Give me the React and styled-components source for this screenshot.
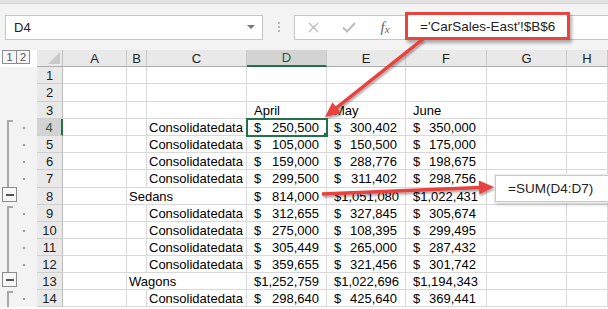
import React from "react";
import styled, { createGlobalStyle } from "styled-components";

const GlobalStyle = createGlobalStyle`
  html, body { margin: 0; padding: 0; background: #fff; }
  body { font-family: "Liberation Sans", Arial, sans-serif; overflow: hidden; }
`;

const GREEN = "#217346";
const RED = "#e8433f";

const Page = styled.div`
  position: relative;
  width: 608px;
  height: 309px;
  overflow: hidden;
  background: #f3f3f3;
`;

const Ribbon = styled.div`
  height: 4px;
  background: #e2e2e2;
  border-bottom: 1px solid #d4d4d4;
  box-sizing: border-box;
`;

const FormulaBar = styled.div`
  display: flex;
  align-items: center;
  height: 46px;
  padding-left: 5px;
  box-sizing: border-box;
`;

const NameBox = styled.div`
  width: 258px;
  height: 25px;
  box-sizing: border-box;
  border: 1px solid #c6c6c6;
  background: #fff;
  display: flex;
  align-items: center;
  justify-content: space-between;
  padding: 0 7px 0 8px;
  font-size: 13px;
  color: #222;
`;

const Caret = styled.span`
  width: 0;
  height: 0;
  border-left: 4px solid transparent;
  border-right: 4px solid transparent;
  border-top: 4px solid #777;
`;

const Grip = styled.div`
  width: 31px;
  display: flex;
  flex-direction: column;
  align-items: center;
  gap: 2px;
`;

const GripDot = styled.span`
  width: 2px;
  height: 2px;
  background: #b8b8b8;
`;

const FxBox = styled.div`
  flex: 1;
  height: 25px;
  box-sizing: border-box;
  border: 1px solid #c6c6c6;
  border-right: none;
  background: #fff;
  display: flex;
  align-items: center;
`;

const IconSlot = styled.span`
  width: ${p => p.$w}px;
  display: flex;
  justify-content: center;
  align-items: center;
`;

const Fx = styled.span`
  font-family: "Liberation Serif", "Times New Roman", serif;
  font-style: italic;
  font-size: 15px;
  color: #666;
  small {
    font-size: 11px;
    position: relative;
    top: 1px;
  }
`;

const Sheet = styled.div`
  display: grid;
  grid-template-columns: 37px 26px 64px 20px 100px 80px 79px 81px 80px 1fr;
  background: #fff;
`;

const Gutter = styled.div`
  background: #f3f3f3;
  display: flex;
  align-items: stretch;
  padding-left: ${p => (p.$minus ? 2 : 7)}px;
`;

const LevelButtons = styled.div`
  display: flex;
  align-items: flex-start;
  padding-left: 2px;
`;

const LevelButton = styled.span`
  width: ${p => p.$w}px;
  height: 14px;
  box-sizing: border-box;
  border: 1px solid #8e8e8e;
  margin-left: ${p => (p.$first ? 0 : -1)}px;
  display: flex;
  align-items: center;
  justify-content: center;
  font-size: 11px;
  color: #555;
  background: #f6f6f6;
`;

const Rail = styled.span`
  width: 6px;
  box-sizing: border-box;
  border-left: 2px solid #a8a8a8;
  border-top: ${p => (p.$top ? "2px solid #a8a8a8" : "none")};
  margin-top: ${p => (p.$top ? 1 : 0)}px;
`;

const OutlineDot = styled.span`
  align-self: center;
  width: 2px;
  height: 2px;
  margin-left: 10px;
  background: #9c9c9c;
`;

const MinusBox = styled.span`
  align-self: flex-start;
  margin-top: -1px;
  width: 15px;
  height: 15px;
  box-sizing: border-box;
  border: 1px solid #8a8a8a;
  background: #f7f7f7;
  display: flex;
  align-items: center;
  justify-content: center;
  &::before {
    content: "";
    width: 8px;
    height: 2px;
    background: #555;
  }
`;

const Corner = styled.div`
  background: #e9e9e9;
  border-right: 1px solid #bdbdbd;
  border-bottom: 1px solid #ababab;
  display: flex;
  align-items: flex-end;
  justify-content: flex-end;
  padding: 0 2px 2px 0;
`;

const CornerTriangle = styled.span`
  width: 0;
  height: 0;
  border-left: 12px solid transparent;
  border-bottom: 12px solid #c9c9c9;
`;

const ColHeader = styled.div`
  background: ${p => (p.$active ? "#d3d3d3" : "#e9e9e9")};
  border-right: 1px solid #c8c8c8;
  border-bottom: ${p => (p.$active ? `2px solid ${GREEN}` : "1px solid #ababab")};
  display: flex;
  align-items: center;
  justify-content: center;
  font-size: 13px;
  color: ${p => (p.$active ? "#1e5c39" : "#222")};
  overflow: hidden;
`;

const RowHeader = styled.div`
  background: ${p => (p.$active ? "#d3d3d3" : "#e9e9e9")};
  border-right: ${p => (p.$active ? `2px solid ${GREEN}` : "1px solid #bdbdbd")};
  border-bottom: 1px solid #cfcfcf;
  display: flex;
  align-items: center;
  justify-content: center;
  font-size: 13px;
  color: ${p => (p.$active ? "#2c5a3e" : "#222")};
`;

const Cell = styled.div`
  position: relative;
  z-index: ${p => (p.$selected ? 2 : p.$spill ? 1 : 0)};
  box-sizing: border-box;
  border-right: 1px solid ${p => (p.$spill ? "transparent" : "#d9d9d9")};
  border-bottom: 1px solid #d9d9d9;
  display: flex;
  align-items: center;
  justify-content: ${p =>
    p.$money ? "space-between" : p.$right ? "flex-end" : "flex-start"};
  padding: 0 ${p => p.$pr ?? 2}px 0 ${p => p.$pl ?? 2}px;
  font-size: 13px;
  color: #000;
  white-space: nowrap;
  overflow: ${p => (p.$spill ? "visible" : "hidden")};
  outline: ${p => (p.$selected ? `2px solid ${GREEN}` : "none")};
  outline-offset: -1px;
  ${p =>
    p.$selected &&
    `
    &::after {
      content: "";
      position: absolute;
      right: -4px;
      bottom: -4px;
      width: 5px;
      height: 5px;
      background: ${GREEN};
      border: 1px solid #fff;
    }
  `}
`;

const FormulaCallout = styled.div`
  position: absolute;
  left: 405px;
  top: 12px;
  width: 165px;
  height: 28px;
  box-sizing: border-box;
  border: 3px solid ${RED};
  background: #fff;
  box-shadow: 2px 3px 3px rgba(0, 0, 0, 0.3);
  display: flex;
  align-items: center;
  padding-left: 12px;
  font-size: 13.5px;
  color: #222;
`;

const SumCallout = styled.div`
  position: absolute;
  left: 495px;
  top: 175px;
  width: 140px;
  height: 27px;
  box-sizing: border-box;
  border: 1px solid #c9c9c9;
  background: #fff;
  box-shadow: 0 0 0 1px #ececec, 1px 2px 4px rgba(0, 0, 0, 0.25);
  display: flex;
  align-items: center;
  padding-left: 12px;
  font-size: 13.5px;
  color: #222;
`;

const Overlay = styled.svg`
  position: absolute;
  left: 0;
  top: 0;
  width: 608px;
  height: 309px;
  pointer-events: none;
`;

const cols = ["A", "B", "C", "D", "E", "F", "G", "H"];
const heights = [17, 18, 17, 17, 17, 17, 18, 17, 17, 17, 17, 17, 17, 17];
const padRight = [7, 8, 10];

const rows = [
  { n: 1 },
  { n: 2 },
  { n: 3, heads: ["April", "May", "June"] },
  { n: 4, mark: "dot", rail: "top", c: "Consolidatedata", vals: ["250,500", "300,402", "350,000"] },
  { n: 5, mark: "dot", rail: "mid", c: "Consolidatedata", vals: ["105,000", "150,500", "175,000"] },
  { n: 6, mark: "dot", rail: "mid", c: "Consolidatedata", vals: ["159,000", "288,776", "198,675"] },
  { n: 7, mark: "dot", rail: "mid", c: "Consolidatedata", vals: ["299,500", "311,402", "298,756"] },
  { n: 8, mark: "minus", b: "Sedans", vals: ["814,000", "1,051,080", "1,022,431"] },
  { n: 9, mark: "dot", rail: "top", c: "Consolidatedata", vals: ["312,655", "327,845", "305,674"] },
  { n: 10, mark: "dot", rail: "mid", c: "Consolidatedata", vals: ["275,000", "108,395", "299,495"] },
  { n: 11, mark: "dot", rail: "mid", c: "Consolidatedata", vals: ["305,449", "265,000", "287,432"] },
  { n: 12, mark: "dot", rail: "mid", c: "Consolidatedata", vals: ["359,655", "321,456", "301,742"] },
  { n: 13, mark: "minus", b: "Wagons", vals: ["1,252,759", "1,022,696", "1,194,343"] },
  { n: 14, mark: "dot", rail: "top", c: "Consolidatedata", vals: ["298,640", "425,640", "369,441"] },
];

function Arrow({ x1, y1, x2, y2 }) {
  const dx = x2 - x1;
  const dy = y2 - y1;
  const len = Math.hypot(dx, dy);
  const ux = dx / len;
  const uy = dy / len;
  const head = 15;
  const half = 7;
  const bx = x2 - ux * head;
  const by = y2 - uy * head;
  const pts = [
    [x2, y2],
    [bx - uy * half, by + ux * half],
    [bx + uy * half, by - ux * half],
  ]
    .map(p => p.join(","))
    .join(" ");
  return (
    <g filter="url(#shade)">
      <line x1={x1} y1={y1} x2={bx + ux * 2} y2={by + uy * 2} stroke={RED} strokeWidth="3.5" />
      <polygon points={pts} fill={RED} />
    </g>
  );
}

function OutlineCell({ row }) {
  if (row.mark === "minus") {
    return (
      <Gutter $minus>
        <MinusBox />
      </Gutter>
    );
  }
  if (!row.rail) return <Gutter />;
  return (
    <Gutter>
      <Rail $top={row.rail === "top"} />
      {row.mark === "dot" && <OutlineDot />}
    </Gutter>
  );
}

function SheetRow({ row }) {
  const cells = [];
  cells.push(<OutlineCell key="g" row={row} />);
  cells.push(
    <RowHeader key="h" $active={row.n === 4}>
      {row.n}
    </RowHeader>
  );
  cells.push(<Cell key="a" />);
  cells.push(
    <Cell key="b" $spill={!!row.b}>
      {row.b}
    </Cell>
  );
  cells.push(<Cell key="c">{row.c}</Cell>);
  [0, 1, 2].forEach(i => {
    if (row.heads) {
      cells.push(
        <Cell key={"v" + i} $pl={7}>
          {row.heads[i]}
        </Cell>
      );
    } else if (row.vals) {
      cells.push(
        <Cell key={"v" + i} $money $pl={7} $pr={padRight[i]} $selected={row.n === 4 && i === 0}>
          <span>$</span>
          <span>{row.vals[i]}</span>
        </Cell>
      );
    } else {
      cells.push(<Cell key={"v" + i} />);
    }
  });
  cells.push(<Cell key="g2" />);
  cells.push(<Cell key="h2" />);
  return cells;
}

export default function App() {
  return (
    <Page>
      <GlobalStyle />
      <Ribbon />
      <FormulaBar>
        <NameBox>
          <span>D4</span>
          <Caret />
        </NameBox>
        <Grip>
          <GripDot />
          <GripDot />
          <GripDot />
        </Grip>
        <FxBox>
          <IconSlot $w={37}>
            <svg width="11" height="11" viewBox="0 0 11 11">
              <path d="M1 1 L10 10 M10 1 L1 10" stroke="#bdbdbd" strokeWidth="1.4" />
            </svg>
          </IconSlot>
          <IconSlot $w={34}>
            <svg width="14" height="11" viewBox="0 0 14 11">
              <path d="M1 5.5 L5 9.5 L13 1" stroke="#bdbdbd" strokeWidth="2" fill="none" />
            </svg>
          </IconSlot>
          <IconSlot $w={38}>
            <Fx>
              f<small>x</small>
            </Fx>
          </IconSlot>
        </FxBox>
      </FormulaBar>
      <Sheet style={{ gridTemplateRows: `17px ${heights.map(h => h + "px").join(" ")} 17px` }}>
        <LevelButtons>
          <LevelButton $w={15} $first>
            1
          </LevelButton>
          <LevelButton $w={14}>2</LevelButton>
        </LevelButtons>
        <Corner>
          <CornerTriangle />
        </Corner>
        {cols.map(c => (
          <ColHeader key={c} $active={c === "D"}>
            {c}
          </ColHeader>
        ))}
        {rows.map(r => (
          <SheetRow key={r.n} row={r} />
        ))}
      </Sheet>
      <FormulaCallout>='CarSales-East'!$B$6</FormulaCallout>
      <SumCallout>=SUM(D4:D7)</SumCallout>
      <Overlay>
        <defs>
          <filter id="shade" x="-10%" y="-10%" width="130%" height="140%">
            <feDropShadow dx="1" dy="2" stdDeviation="1" floodColor="#000" floodOpacity="0.35" />
          </filter>
        </defs>
        <Arrow x1={423} y1={39} x2={325} y2={117} />
        <Arrow x1={322} y1={194} x2={494} y2={187} />
      </Overlay>
    </Page>
  );
}
